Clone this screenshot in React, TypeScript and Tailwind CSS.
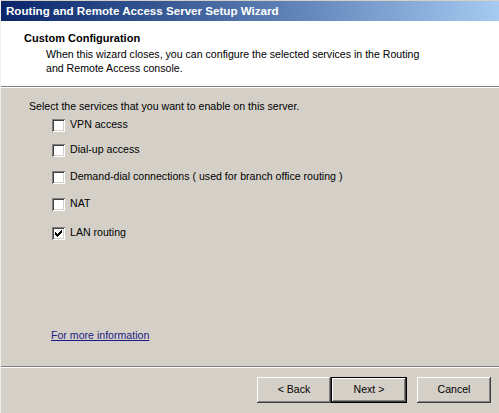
import { useState } from "react";

const services = [
  { id: "vpn", label: "VPN access", checked: false, mt: "mt-[5px]" },
  { id: "dialup", label: "Dial-up access", checked: false, mt: "mt-[11px]" },
  { id: "demand", label: "Demand-dial connections ( used for branch office routing )", checked: false, mt: "mt-[13px]" },
  { id: "nat", label: "NAT", checked: false, mt: "mt-[13px]" },
  { id: "lan", label: "LAN routing", checked: true, mt: "mt-[15px]" },
];

function ClassicCheckbox({ checked, onToggle }: { checked: boolean; onToggle: () => void }) {
  return (
    <button
      onClick={onToggle}
      className="w-[13px] h-[13px] bg-white shrink-0 flex items-center justify-center shadow-[inset_1px_1px_#808080,inset_-1px_-1px_#ffffff,inset_2px_2px_#404040,inset_-2px_-2px_#d4d0c8]"
    >
      {checked && (
        <svg width="7" height="7" viewBox="0 0 7 7" className="block">
          <path d="M0 2h1v1h1v1h1v-1h1v-1h1v-1h1v-1h1v3h-1v1h-1v1h-1v1h-1v1h-1v-1h-1v-1h-1v-1h-1z" fill="#000" />
        </svg>
      )}
    </button>
  );
}

function WizardButton({ label, isDefault }: { label: string; isDefault?: boolean }) {
  return (
    <button
      className={
        isDefault
          ? "w-[76px] h-[26px] bg-[#d4d0c8] text-black shadow-[inset_0_0_0_1px_#000000,inset_-2px_-2px_#404040,inset_2px_2px_#ffffff,inset_-3px_-3px_#808080]"
          : "w-[74px] h-[26px] bg-[#d4d0c8] text-black shadow-[inset_-1px_-1px_#404040,inset_1px_1px_#ffffff,inset_-2px_-2px_#808080]"
      }
    >
      {label}
    </button>
  );
}

export default function App() {
  const [checked, setChecked] = useState<Record<string, boolean>>(
    Object.fromEntries(services.map((s) => [s.id, s.checked]))
  );

  return (
    <div className="w-[499px] h-[413px] bg-[#d4d0c8] flex flex-col overflow-hidden text-[10.6px] text-black font-['Liberation_Sans',Arial,sans-serif] border-l border-[#f0eee8]">
      {/* Title bar */}
      <div className="border-t border-[#d4d0c8] h-[21px] bg-gradient-to-r from-[#0a246a] to-[#a6caf0] flex items-center pl-[5px]">
        <span className="text-white font-bold text-[11.6px]">Routing and Remote Access Server Setup Wizard</span>
      </div>

      {/* Header */}
      <div className="h-[65px] bg-white pl-[23px] pt-[11px]">
        <div className="font-bold leading-[13px] text-[11px]">Custom Configuration</div>
        <p className="pl-[22px] mt-[2px] leading-[14px]">
          When this wizard closes, you can configure the selected services in the Routing
          <br />
          and Remote Access console.
        </p>
      </div>
      <div className="border-t border-[#808080] border-b border-b-white" />

      {/* Body */}
      <div className="flex-1 flex flex-col pl-[28px] pt-[12px]">
        <div className="leading-[13px]">Select the services that you want to enable on this server.</div>
        <div className="pl-[23px] flex flex-col">
          {services.map((s) => (
            <label key={s.id} className={`flex items-center gap-[5px] h-[14px] ${s.mt}`}>
              <ClassicCheckbox
                checked={checked[s.id]}
                onToggle={() => setChecked((c) => ({ ...c, [s.id]: !c[s.id] }))}
              />
              <span>{s.label}</span>
            </label>
          ))}
        </div>
        <a href="#" className="mt-auto mb-[24px] ml-[22px] text-[#1c1c84] underline leading-[14px] w-fit">
          For more information
        </a>
      </div>
      <div className="border-t border-[#808080] border-b border-b-white" />

      {/* Buttons */}
      <div className="h-[45px] flex justify-end items-start pt-[9px] pr-[8px]">
        <WizardButton label="< Back" />
        <WizardButton label="Next >" isDefault />
        <div className="w-[10px]" />
        <WizardButton label="Cancel" />
      </div>
    </div>
  );
}
